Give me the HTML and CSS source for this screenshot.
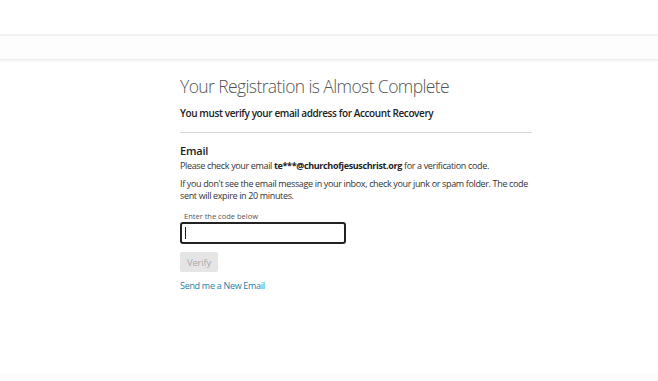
FILE: index.html
```html
<!DOCTYPE html>
<html lang="en">
<head>
    <meta charset="UTF-8">
    <meta name="viewport" content="width=device-width, initial-scale=1.0">
    <title>Your Registration is Almost Complete</title>
    <link rel="stylesheet" href="styles.css">
</head>
<body>
    <header class="top-bar"></header>
    <nav class="sub-bar"></nav>

    <main class="container">
        <h1>Your Registration is Almost Complete</h1>
        <p class="lead">You must verify your email address for Account Recovery</p>
        <hr class="divider">

        <h2>Email</h2>
        <p class="text">Please check your email <strong>te***@churchofjesuschrist.org</strong> for a verification code.</p>
        <p class="text note">If you don't see the email message in your inbox, check your junk or spam folder. The code sent will expire in 20 minutes.</p>

        <div class="input-group">
            <label for="code">Enter the code below</label>
            <div class="field">
                <input type="text" id="code">
                <span class="caret"></span>
            </div>
        </div>
        <button class="verify" disabled>Verify</button>
        <a class="resend" href="#">Send me a New Email</a>
    </main>

    <footer class="footer"></footer>
</body>
</html>
```

FILE: styles.css
```css
body {
    font-family: "Open Sans", Arial, sans-serif;
    margin: 0;
    background: #fff;
    color: #222;
    height: 381px;
    position: relative;
    overflow: hidden;
}
.top-bar {
    height: 34px;
    background: #fff;
    border-bottom: 2px solid #f2f2f2;
}
.sub-bar {
    height: 23px;
    background: #fdfdfd;
    border-bottom: 1px solid #ececec;
    box-shadow: 0 1px 2px rgba(0, 0, 0, 0.06);
}
.container {
    width: 352px;
    margin-left: 180px;
    padding-top: 14px;
}
h1 {
    font-size: 17.5px;
    font-weight: 300;
    letter-spacing: -0.6px;
    color: #555;
    margin: 0;
    line-height: 24px;
}
.lead {
    font-size: 10px;
    font-weight: 600;
    letter-spacing: -0.4px;
    margin: 8px 0 0;
    line-height: 14px;
}
.divider {
    border: 0;
    border-top: 1px solid #d6d6d6;
    margin: 12px 0 0;
}
h2 {
    font-size: 11px;
    font-weight: 600;
    letter-spacing: -0.2px;
    margin: 11px 0 0;
    line-height: 14px;
}
.text {
    font-size: 9px;
    letter-spacing: -0.35px;
    color: #333;
    margin: 2px 0 0;
    line-height: 12px;
}
.text strong {
    font-weight: 700;
    color: #222;
}
.note {
    margin-top: 6px;
    line-height: 11.5px;
}
.input-group {
    margin-top: 10px;
}
.input-group label {
    display: block;
    font-size: 7.5px;
    color: #555;
    margin-left: 4px;
    line-height: 10px;
}
.field {
    position: relative;
    width: 166px;
    margin-top: 1px;
}
.field input {
    display: block;
    box-sizing: border-box;
    width: 166px;
    height: 22px;
    border: 2px solid #222;
    border-radius: 3px;
    outline: none;
    padding: 0 5px;
    font-size: 11px;
    font-family: inherit;
}
.caret {
    position: absolute;
    left: 5px;
    top: 5px;
    width: 1px;
    height: 12px;
    background: #222;
}
.verify {
    display: block;
    margin-top: 8px;
    width: 38px;
    height: 20px;
    padding: 0;
    border: 0;
    border-radius: 2px;
    background: #e5e5e5;
    color: #ababab;
    font-family: inherit;
    font-size: 9.5px;
    letter-spacing: -0.2px;
}
.resend {
    display: block;
    width: max-content;
    margin-top: 8px;
    font-size: 9px;
    letter-spacing: -0.3px;
    line-height: 12px;
    color: #2580a8;
    text-decoration: none;
}
.footer {
    position: absolute;
    left: 0;
    right: 0;
    bottom: 0;
    height: 8px;
    background: #fcfcfc;
}
```
